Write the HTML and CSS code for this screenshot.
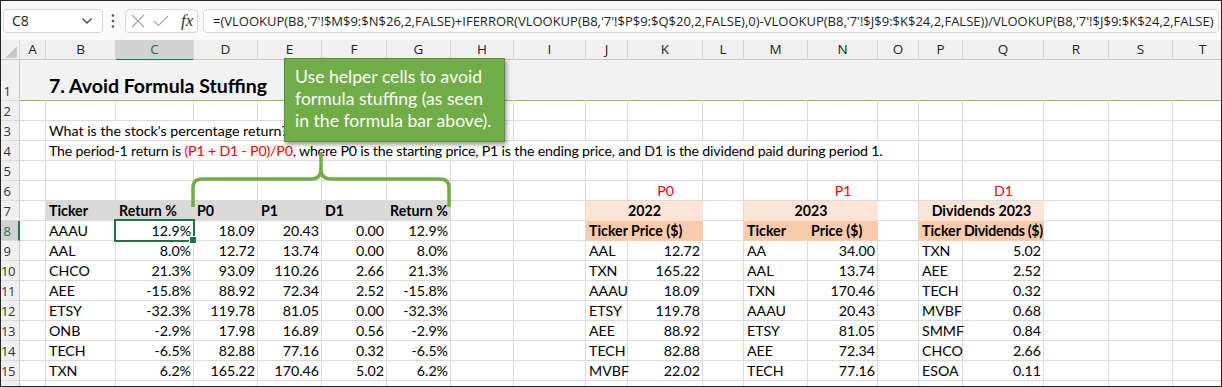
FILE: index.html
```html
<!DOCTYPE html>
<html lang="en">
<head>
    <meta charset="UTF-8">
    <title>7. Avoid Formula Stuffing</title>
    <link rel="stylesheet" href="styles.css">
</head>
<body>
<div class="window">
    <div class="fbar">
        <div class="namebox">
            <span>C8</span>
            <svg width="12" height="8" viewBox="0 0 12 8"><path d="M1.5 1.5 L6 6 L10.5 1.5" fill="none" stroke="#444" stroke-width="1.3"/></svg>
        </div>
        <svg class="dots" width="6" height="16" viewBox="0 0 6 16"><circle cx="3" cy="2.5" r="1.3" fill="#555"/><circle cx="3" cy="8" r="1.3" fill="#555"/><circle cx="3" cy="13.5" r="1.3" fill="#555"/></svg>
        <div class="fxbox">
            <svg width="14" height="14" viewBox="0 0 14 14"><path d="M1 1 L13 13 M13 1 L1 13" stroke="#a6a6a6" stroke-width="1.2" fill="none"/></svg>
            <svg width="16" height="12" viewBox="0 0 16 12"><path d="M1 6 L5.5 10.5 L15 1" stroke="#a6a6a6" stroke-width="1.2" fill="none"/></svg>
            <span class="fx">fx</span>
        </div>
        <div class="formula">=(VLOOKUP(B8,'7'!$M$9:$N$26,2,FALSE)+IFERROR(VLOOKUP(B8,'7'!$P$9:$Q$20,2,FALSE),0)-VLOOKUP(B8,'7'!$J$9:$K$24,2,FALSE))/VLOOKUP(B8,'7'!$J$9:$K$24,2,FALSE)</div>
    </div>

    <div class="sheet">
        <div class="row colhead">
            <div class="corner"><svg width="12" height="12" viewBox="0 0 12 12"><path d="M12 0 L12 12 L0 12 Z" fill="#c8c8c8"/></svg></div>
            <div>A</div><div>B</div><div class="on">C</div><div>D</div><div>E</div><div>F</div><div>G</div><div>H</div><div>I</div><div>J</div><div>K</div><div>L</div><div>M</div><div>N</div><div>O</div><div>P</div><div>Q</div><div>R</div><div>S</div><div>T</div>
        </div>

        <div class="row r1">
            <div class="rh"><span>1</span></div>
            <div class="c"></div><div class="c title s4">7. Avoid Formula Stuffing</div><div class="c"></div><div class="c"></div><div class="c"></div><div class="c"></div><div class="c"></div><div class="c"></div><div class="c"></div><div class="c"></div><div class="c"></div><div class="c"></div><div class="c"></div><div class="c"></div><div class="c"></div><div class="c"></div><div class="c"></div>
        </div>

        <div class="row">
            <div class="rh"><span>2</span></div>
            <div class="c"></div><div class="c"></div><div class="c"></div><div class="c"></div><div class="c"></div><div class="c"></div><div class="c"></div><div class="c"></div><div class="c"></div><div class="c"></div><div class="c"></div><div class="c"></div><div class="c"></div><div class="c"></div><div class="c"></div><div class="c"></div><div class="c"></div><div class="c"></div><div class="c"></div><div class="c"></div>
        </div>

        <div class="row">
            <div class="rh"><span>3</span></div>
            <div class="c"></div><div class="c s5">What is the stock's percentage return?</div><div class="c"></div><div class="c"></div><div class="c"></div><div class="c"></div><div class="c"></div><div class="c"></div><div class="c"></div><div class="c"></div><div class="c"></div><div class="c"></div><div class="c"></div><div class="c"></div><div class="c"></div><div class="c"></div>
        </div>

        <div class="row">
            <div class="rh"><span>4</span></div>
            <div class="c"></div><div class="c s14 long">The period-1 return is <span class="red">(P1 + D1 - P0)/P0</span>, where P0 is the starting price, P1 is the ending price, and D1 is the dividend paid during period 1.</div><div class="c"></div><div class="c"></div><div class="c"></div><div class="c"></div><div class="c"></div>
        </div>

        <div class="row">
            <div class="rh"><span>5</span></div>
            <div class="c"></div><div class="c"></div><div class="c"></div><div class="c"></div><div class="c"></div><div class="c"></div><div class="c"></div><div class="c"></div><div class="c"></div><div class="c"></div><div class="c"></div><div class="c"></div><div class="c"></div><div class="c"></div><div class="c"></div><div class="c"></div><div class="c"></div><div class="c"></div><div class="c"></div><div class="c"></div>
        </div>

        <div class="row">
            <div class="rh"><span>6</span></div>
            <div class="c"></div><div class="c"></div><div class="c"></div><div class="c"></div><div class="c"></div><div class="c"></div><div class="c"></div><div class="c"></div><div class="c"></div><div class="c"></div>
            <div class="c mid red">P0</div><div class="c"></div><div class="c"></div><div class="c mid red">P1</div><div class="c"></div><div class="c"></div><div class="c mid red">D1</div><div class="c"></div><div class="c"></div><div class="c"></div>
        </div>

        <div class="row">
            <div class="rh"><span>7</span></div>
            <div class="c"></div>
            <div class="c hd">Ticker</div><div class="c hd">Return %</div><div class="c hd">P0</div><div class="c hd">P1</div><div class="c hd">D1</div><div class="c hd">Return %</div>
            <div class="c"></div><div class="c"></div>
            <div class="c pk1 s2">2022</div><div class="c"></div>
            <div class="c pk1 s2">2023</div><div class="c"></div>
            <div class="c pk1 s2">Dividends 2023</div>
            <div class="c"></div><div class="c"></div><div class="c"></div>
        </div>

        <div class="row">
            <div class="rh on"><span>8</span></div>
            <div class="c"></div>
            <div class="c">AAAU</div><div class="c n sel">12.9%</div><div class="c n">18.09</div><div class="c n">20.43</div><div class="c n">0.00</div><div class="c n">12.9%</div>
            <div class="c"></div><div class="c"></div>
            <div class="c pk2">Ticker</div><div class="c pk2">Price ($)</div><div class="c"></div>
            <div class="c pk2">Ticker</div><div class="c pk2">Price ($)</div><div class="c"></div>
            <div class="c pk2">Ticker</div><div class="c pk2 tight">Dividends ($)</div>
            <div class="c"></div><div class="c"></div><div class="c"></div>
        </div>

        <div class="row">
            <div class="rh"><span>9</span></div>
            <div class="c"></div>
            <div class="c">AAL</div><div class="c n">8.0%</div><div class="c n">12.72</div><div class="c n">13.74</div><div class="c n">0.00</div><div class="c n">8.0%</div>
            <div class="c"></div><div class="c"></div>
            <div class="c">AAL</div><div class="c n">12.72</div><div class="c"></div>
            <div class="c">AA</div><div class="c n">34.00</div><div class="c"></div>
            <div class="c">TXN</div><div class="c n">5.02</div>
            <div class="c"></div><div class="c"></div><div class="c"></div>
        </div>

        <div class="row">
            <div class="rh"><span>10</span></div>
            <div class="c"></div>
            <div class="c">CHCO</div><div class="c n">21.3%</div><div class="c n">93.09</div><div class="c n">110.26</div><div class="c n">2.66</div><div class="c n">21.3%</div>
            <div class="c"></div><div class="c"></div>
            <div class="c">TXN</div><div class="c n">165.22</div><div class="c"></div>
            <div class="c">AAL</div><div class="c n">13.74</div><div class="c"></div>
            <div class="c">AEE</div><div class="c n">2.52</div>
            <div class="c"></div><div class="c"></div><div class="c"></div>
        </div>

        <div class="row">
            <div class="rh"><span>11</span></div>
            <div class="c"></div>
            <div class="c">AEE</div><div class="c n">-15.8%</div><div class="c n">88.92</div><div class="c n">72.34</div><div class="c n">2.52</div><div class="c n">-15.8%</div>
            <div class="c"></div><div class="c"></div>
            <div class="c">AAAU</div><div class="c n">18.09</div><div class="c"></div>
            <div class="c">TXN</div><div class="c n">170.46</div><div class="c"></div>
            <div class="c">TECH</div><div class="c n">0.32</div>
            <div class="c"></div><div class="c"></div><div class="c"></div>
        </div>

        <div class="row">
            <div class="rh"><span>12</span></div>
            <div class="c"></div>
            <div class="c">ETSY</div><div class="c n">-32.3%</div><div class="c n">119.78</div><div class="c n">81.05</div><div class="c n">0.00</div><div class="c n">-32.3%</div>
            <div class="c"></div><div class="c"></div>
            <div class="c">ETSY</div><div class="c n">119.78</div><div class="c"></div>
            <div class="c">AAAU</div><div class="c n">20.43</div><div class="c"></div>
            <div class="c">MVBF</div><div class="c n">0.68</div>
            <div class="c"></div><div class="c"></div><div class="c"></div>
        </div>

        <div class="row">
            <div class="rh"><span>13</span></div>
            <div class="c"></div>
            <div class="c">ONB</div><div class="c n">-2.9%</div><div class="c n">17.98</div><div class="c n">16.89</div><div class="c n">0.56</div><div class="c n">-2.9%</div>
            <div class="c"></div><div class="c"></div>
            <div class="c">AEE</div><div class="c n">88.92</div><div class="c"></div>
            <div class="c">ETSY</div><div class="c n">81.05</div><div class="c"></div>
            <div class="c">SMMF</div><div class="c n">0.84</div>
            <div class="c"></div><div class="c"></div><div class="c"></div>
        </div>

        <div class="row">
            <div class="rh"><span>14</span></div>
            <div class="c"></div>
            <div class="c">TECH</div><div class="c n">-6.5%</div><div class="c n">82.88</div><div class="c n">77.16</div><div class="c n">0.32</div><div class="c n">-6.5%</div>
            <div class="c"></div><div class="c"></div>
            <div class="c">TECH</div><div class="c n">82.88</div><div class="c"></div>
            <div class="c">AEE</div><div class="c n">72.34</div><div class="c"></div>
            <div class="c">CHCO</div><div class="c n">2.66</div>
            <div class="c"></div><div class="c"></div><div class="c"></div>
        </div>

        <div class="row">
            <div class="rh"><span>15</span></div>
            <div class="c"></div>
            <div class="c">TXN</div><div class="c n">6.2%</div><div class="c n">165.22</div><div class="c n">170.46</div><div class="c n">5.02</div><div class="c n">6.2%</div>
            <div class="c"></div><div class="c"></div>
            <div class="c">MVBF</div><div class="c n">22.02</div><div class="c"></div>
            <div class="c">TECH</div><div class="c n">77.16</div><div class="c"></div>
            <div class="c">ESOA</div><div class="c n">0.11</div>
            <div class="c"></div><div class="c"></div><div class="c"></div>
        </div>

        <div class="row">
            <div class="rh"></div>
            <div class="c"></div><div class="c"></div><div class="c"></div><div class="c"></div><div class="c"></div><div class="c"></div><div class="c"></div><div class="c"></div><div class="c"></div><div class="c"></div><div class="c"></div><div class="c"></div><div class="c"></div><div class="c"></div><div class="c"></div><div class="c"></div><div class="c"></div><div class="c"></div><div class="c"></div><div class="c"></div>
        </div>
    </div>

    <!-- note shape and brace sit on top of the grid -->
    <div class="callout">Use helper cells to avoid formula stuffing (as seen in the formula bar above).</div>
    <svg class="brace" width="1222" height="387" viewBox="0 0 1222 387">
        <path d="M193 207 L193 188 Q193 179 202 179 L311 179 Q321 179 321 169 L321 152 M321 169 Q321 179 331 179 L440 179 Q449 179 449 188 L449 207" fill="none" stroke="#70ad47" stroke-width="3.5" stroke-linejoin="round"/>
    </svg>
</div>
</body>
</html>
```

FILE: styles.css
```css
* {
    box-sizing: border-box;
}
body {
    margin: 0;
    background: #fff;
}
.window {
    position: relative;
    width: 1222px;
    height: 387px;
    border: 1px solid #262626;
    overflow: hidden;
    background: #fff;
    font-family: Lato, "Noto Sans", sans-serif;
    color: #000;
}

/* formula bar */
.fbar {
    height: 39px;
    background: #f9f9f9;
    display: flex;
    align-items: center;
    padding: 0 2px 0 2px;
    font-family: "Open Sans", "Noto Sans", sans-serif;
}
.namebox {
    width: 100px;
    height: 24px;
    background: #fff;
    border: 1px solid #d6d6d6;
    border-radius: 4px;
    display: flex;
    align-items: center;
    justify-content: space-between;
    padding: 0 9px 0 8px;
    font-size: 14px;
    color: #222;
}
.dots {
    margin: 0 9px 0 7px;
}
.fxbox {
    width: 73px;
    height: 24px;
    background: #fff;
    border: 1px solid #d6d6d6;
    border-radius: 4px;
    display: flex;
    align-items: center;
    gap: 8px;
    padding-left: 5px;
}
.fx {
    font-family: "Liberation Serif", serif;
    font-style: italic;
    font-size: 17px;
    color: #333;
    margin-left: 4px;
}
.formula {
    flex: 1;
    height: 24px;
    margin-left: 5px;
    background: #fff;
    border: 1px solid #d6d6d6;
    border-radius: 4px;
    padding-left: 9px;
    font-size: 13px;
    letter-spacing: 0;
    line-height: 22px;
    white-space: nowrap;
    overflow: hidden;
    color: #222;
}

/* grid */
.row {
    display: grid;
    grid-template-columns: 19px 26px 70px 78px 64px 64px 65px 64px 63px 72px 42px 75px 41px 64px 70px 41px 44px 81px 65px 64px 60px;
    height: 20px;
}
.colhead {
    background: #f0f0f0;
    border-bottom: 1px solid #c6c6c6;
    font-family: "Open Sans", "Noto Sans", sans-serif;
    font-size: 13.5px;
    color: #222;
}
.colhead div {
    border-right: 1px solid #d4d4d4;
    text-align: center;
    line-height: 19px;
}
.colhead .on {
    background: #d2d2d2;
    color: #1e6b42;
    border-bottom: 2px solid #217346;
}
.corner {
    display: flex;
    align-items: flex-end;
    justify-content: flex-end;
    padding: 0 2px 3px 0;
}
.rh {
    background: #f0f0f0;
    border-right: 1px solid #c6c6c6;
    border-bottom: 1px solid #dadada;
    font-family: "Open Sans", "Noto Sans", sans-serif;
    font-size: 13px;
    color: #333;
    line-height: 21px;
    overflow: hidden;
}
.rh span {
    display: block;
    width: 12px;
    text-align: center;
    letter-spacing: -0.5px;
}
.rh.on {
    background: #d2d2d2;
    color: #217346;
    border-right: 2px solid #217346;
}
.r1 {
    height: 41px;
}
.r1 .c {
    background: #f2f2f2;
    border-right-color: #f2f2f2;
    border-bottom: 1px solid #8fc06c;
}
.r1 .rh {
    line-height: 62px;
}
.c {
    border-right: 1px solid #dadada;
    border-bottom: 1px solid #dadada;
    font-size: 14.2px;
    line-height: 19px;
    padding: 0 2px 0 3px;
    white-space: nowrap;
}
.s2 { grid-column: span 2; }
.s4 { grid-column: span 4; }
.s5 { grid-column: span 5; }
.s14 { grid-column: span 14; }
.long {
    letter-spacing: -0.18px;
}
.title {
    font-weight: bold;
    font-size: 19.5px;
    line-height: 24px;
    padding-top: 14px;
}
.red {
    color: #ff0000;
}
.mid {
    text-align: center;
}
.n {
    text-align: right;
}
.hd {
    background: #d9d9d9;
    border-right-color: #d9d9d9;
    font-weight: bold;
}
.pk1 {
    background: #fce4d6;
    border-right-color: #fce4d6;
    border-bottom-color: #fce4d6;
    text-align: center;
    font-weight: bold;
}
.pk2 {
    background: #f8cbad;
    border-right-color: #f8cbad;
    border-bottom-color: #f8cbad;
    font-weight: bold;
}
.tight {
    letter-spacing: -0.3px;
    padding-left: 1px;
}
.sel {
    position: relative;
}
.sel::before {
    content: "";
    position: absolute;
    left: -2px;
    top: -2px;
    right: -2px;
    bottom: -2px;
    border: 2px solid #217346;
}
.sel::after {
    content: "";
    position: absolute;
    right: -4px;
    bottom: -4px;
    width: 6px;
    height: 6px;
    background: #217346;
    border: 1px solid #fff;
}

/* overlays */
.callout {
    position: absolute;
    left: 283px;
    top: 57px;
    width: 221px;
    height: 84px;
    background: #70ad47;
    border: 1px solid #5a8f38;
    box-shadow: 2px 3px 4px rgba(0, 0, 0, 0.35);
    color: #fff;
    font-size: 17.6px;
    line-height: 22px;
    padding: 7px 8px 0 10px;
}
.brace {
    position: absolute;
    left: -1px;
    top: -1px;
    pointer-events: none;
}
```
